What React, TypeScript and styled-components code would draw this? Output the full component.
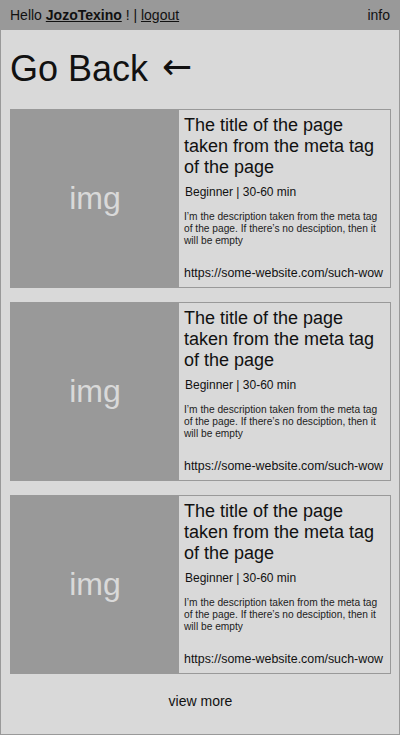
import styled, { createGlobalStyle } from "styled-components";

const GlobalStyle = createGlobalStyle`
  html, body {
    margin: 0;
    padding: 0;
    background: #d9d9d9;
  }
  body {
    font-family: "Liberation Sans", Arial, sans-serif;
    color: #111;
  }
  * {
    box-sizing: border-box;
  }
`;

const Page = styled.div`
  display: flex;
  flex-direction: column;
  min-height: 735px;
  background: #d9d9d9;
  border: 1px solid #999999;
  border-top: none;
`;

const Header = styled.header`
  display: flex;
  justify-content: space-between;
  align-items: center;
  height: 30px;
  padding: 0 9px;
  background: #999999;
  font-size: 14px;
  color: #111;
`;

const Greeting = styled.div`
  white-space: pre;
`;

const UserName = styled.a`
  font-weight: bold;
  color: #111;
  text-decoration: underline;
`;

const HeaderLink = styled.a`
  color: #111;
  text-decoration: underline;
`;

const InfoLink = styled.a`
  color: #111;
  text-decoration: none;
`;

const Main = styled.main`
  display: flex;
  flex-direction: column;
  flex: 1;
  padding: 0 8px 0 9px;
`;

const BackTitle = styled.h1`
  display: flex;
  align-items: center;
  gap: 14px;
  margin: 18px 0 20px;
  font-size: 36px;
  font-weight: normal;
  line-height: 41px;
  color: #111;
`;

const Arrow = styled.span`
  font-family: "DejaVu Sans", sans-serif;
  font-size: 36px;
  line-height: 1;
  margin-top: -4px;
`;

const CardList = styled.div`
  display: flex;
  flex-direction: column;
  gap: 14px;
`;

const Card = styled.article`
  display: flex;
  height: 179px;
  border: 1px solid #999999;
  background: #d9d9d9;
`;

const Thumb = styled.div`
  display: flex;
  align-items: center;
  justify-content: center;
  width: 168px;
  flex-shrink: 0;
  background: #999999;
  color: #d9d9d9;
  font-size: 32px;
`;

const CardBody = styled.div`
  display: flex;
  flex-direction: column;
  flex: 1;
  min-width: 0;
  padding: 5px 4px 7px 5px;
`;

const CardTitle = styled.h2`
  margin: 0;
  font-size: 18px;
  font-weight: normal;
  line-height: 21px;
  color: #111;
`;

const Meta = styled.div`
  margin-top: 7px;
  padding-left: 1px;
  font-size: 12px;
  color: #111;
`;

const Description = styled.p`
  margin: 12px 8px 0 0;
  font-size: 10.2px;
  line-height: 12px;
  color: #222;
`;

const Url = styled.a`
  margin-top: auto;
  font-size: 12.4px;
  white-space: nowrap;
  color: #111;
  text-decoration: none;
`;

const Footer = styled.div`
  display: flex;
  justify-content: center;
  padding: 19px 0;
  font-size: 14px;
  color: #111;
`;

const items = [1, 2, 3].map((id) => ({
  id,
  title: "The title of the page taken from the meta tag of the page",
  meta: "Beginner | 30-60 min",
  description:
    "I’m the description taken from the meta tag of the page. If there’s no desciption, then it will be empty",
  url: "https://some-website.com/such-wow",
}));

export default function App() {
  return (
    <>
      <GlobalStyle />
      <Page>
        <Header>
          <Greeting>
            Hello <UserName>JozoTexino</UserName> ! | <HeaderLink>logout</HeaderLink>
          </Greeting>
          <InfoLink>info</InfoLink>
        </Header>
        <Main>
          <BackTitle>
            Go Back <Arrow>←</Arrow>
          </BackTitle>
          <CardList>
            {items.map((item) => (
              <Card key={item.id}>
                <Thumb>img</Thumb>
                <CardBody>
                  <CardTitle>{item.title}</CardTitle>
                  <Meta>{item.meta}</Meta>
                  <Description>{item.description}</Description>
                  <Url>{item.url}</Url>
                </CardBody>
              </Card>
            ))}
          </CardList>
          <Footer>view more</Footer>
        </Main>
      </Page>
    </>
  );
}
